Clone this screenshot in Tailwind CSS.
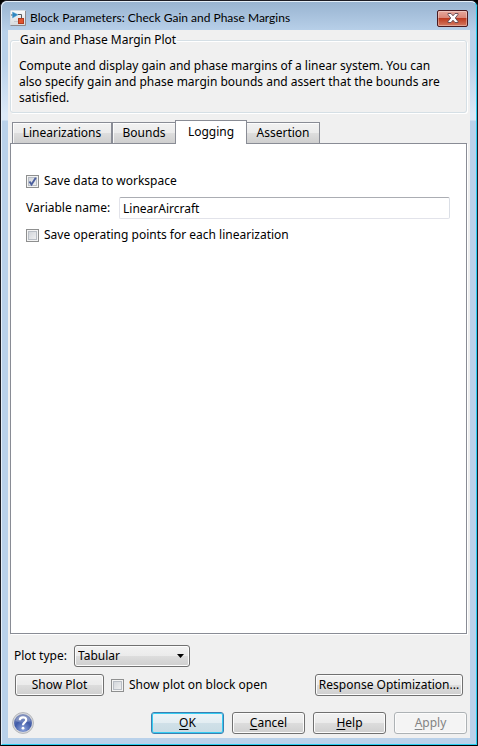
<!DOCTYPE html>
<html lang="en">

<head>
    <meta charset="UTF-8" />
    <meta name="viewport" content="width=device-width, initial-scale=1.0" />
    <title>Block Parameters: Check Gain and Phase Margins</title>
    <script src="https://cdn.jsdelivr.net/npm/@tailwindcss/browser@4"></script>
</head>

<body class="min-h-screen flex flex-col bg-black font-['Noto_Sans',sans-serif] text-[12px] leading-4 text-black">

    <div class="flex-1 flex flex-col rounded-t-[7px] border border-[#1c1c24] border-b-black bg-[#b9d1ea]">
        <div class="flex-1 flex flex-col rounded-t-[6px] border border-t-[#e4eef8] border-l-[#e4eef8] border-r-[#29cdf0] border-b-[#29cdf0] px-[6px] pb-[6px] bg-[linear-gradient(#99b4d1_0px,#b9d1ea_30px,#b9d1ea_60px,#dce9f7_112px,#dce9f7_118px,#b9d1ea_119px)]">

            <!-- title bar -->
            <header class="h-7 pt-1 flex items-center gap-1 pl-[2px] pr-[2px]">
                <svg class="size-4 shrink-0" viewBox="0 0 16 16" fill="none">
                    <defs>
                        <linearGradient id="tile" x2="0" y2="1">
                            <stop stop-color="#fbfbfb" />
                            <stop offset="1" stop-color="#d5d9dd" />
                        </linearGradient>
                    </defs>
                    <rect x=".5" y=".5" width="15" height="15" rx="1" fill="url(#tile)" stroke="#d7dce2" />
                    <path d="M.5 15.500h15V1" stroke="#8e8a8c" />
                    <path d="M1 5h2M8 4.500h3.500v4" stroke="#55585e" />
                    <path d="M2.500 2l5.500 2.700-5.500 3.300z" fill="#2f86c0" stroke="#5aa6d4" stroke-width=".5" />
                    <rect x="8.500" y="8.500" width="5" height="5" fill="#e0542e" stroke="#b03c20" />
                    <path d="M4 11.500h4" stroke="#c5c8cc" />
                </svg>
                <h1 class="flex-1 font-['Lato',sans-serif] text-[12px]">Block Parameters: Check Gain and Phase Margins</h1>
                <button type="button" aria-label="Close" class="w-[31px] h-[17px] flex items-center justify-center rounded-[2px] border border-[#4a1a20] bg-[linear-gradient(#e6a89c,#d98576_48%,#bd3b20_50%,#d47a62)] shadow-[inset_0_0_0_1px_#ffffff55]">
                    <svg class="w-3 h-[10px]" viewBox="0 0 12 10">
                        <path d="M1 .5h3l2 2.300 2-2.300h3v1L8.300 5 11 8.500v1H8L6 7.200 4 9.500H1v-1L3.700 5 1 1.500z" fill="#fff" stroke="#5c4650" stroke-width=".9" />
                    </svg>
                </button>
            </header>

            <main class="flex-1 flex flex-col bg-[#f0f0f0] pl-[2px] pr-[3px] pb-1">

                <fieldset class="mt-[2px] h-[81px] rounded-[3px] border border-[#d5dfe5] shadow-[inset_1px_1px_0_#fff,1px_1px_0_#fff] px-2">
                    <legend class="px-px">Gain and Phase Margin Plot</legend>
                    <p class="pt-[10px] pr-3">Compute and display gain and phase margins of a linear system. You can also specify gain and phase margin bounds and assert that the bounds are satisfied.</p>
                </fieldset>

                <!-- tabs -->
                <div role="tablist" class="mt-[7px] h-[23px] pl-[2px] flex items-end relative z-10">
                    <button type="button" role="tab" class="w-[100px] h-[21px] border border-b-0 border-[#898c95] bg-[linear-gradient(#f2f2f2,#ebebeb_50%,#dddddd_52%,#cfcfcf)] shadow-[inset_1px_1px_0_#ffffffcc]">Linearizations</button>
                    <button type="button" role="tab" class="w-[63px] h-[21px] border border-b-0 border-r-0 border-[#898c95] bg-[linear-gradient(#f2f2f2,#ebebeb_50%,#dddddd_52%,#cfcfcf)] shadow-[inset_1px_1px_0_#ffffffcc]">Bounds</button>
                    <button type="button" role="tab" aria-selected="true" class="w-[72px] h-6 -mb-px pb-px border border-b-0 border-[#898c95] bg-white">Logging</button>
                    <button type="button" role="tab" class="w-[73px] h-[21px] border border-b-0 border-l-0 border-[#898c95] bg-[linear-gradient(#f2f2f2,#ebebeb_50%,#dddddd_52%,#cfcfcf)] shadow-[inset_0_1px_0_#ffffffcc]">Assertion</button>
                </div>

                <section role="tabpanel" class="flex-1 border border-[#898c95] bg-white shadow-[1px_1px_0_#fff] pl-[15px] pr-4 pt-[29px]">
                    <label class="flex items-center gap-[5px]">
                        <input type="checkbox" checked class="peer appearance-none size-[13px] border border-[#8e8f8f] bg-[linear-gradient(135deg,#cbcfd5,#f6f6f6)] shadow-[inset_0_0_0_1px_#f4f4f4,inset_0_0_0_2px_#b9bec5]" />
                        <svg class="hidden peer-checked:block absolute size-[13px]" viewBox="0 0 13 13" fill="none">
                            <path d="M3.500 6.500L5.500 9.500L9.800 2.800" stroke="#4b5f9e" stroke-width="1.900" />
                        </svg>
                        Save data to workspace
                    </label>
                    <div class="mt-2 flex items-center gap-[6px]">
                        <label for="varName" class="w-[87px] shrink-0 whitespace-nowrap">Variable name:</label>
                        <input id="varName" type="text" value="LinearAircraft" class="flex-1 min-w-0 h-[22px] px-[3px] rounded-[2px] border border-[#e2e3ea] border-t-[#abadb3] border-r-[#dbdfe6] bg-white outline-none" />
                    </div>
                    <label class="mt-2 flex items-center gap-[5px]">
                        <input type="checkbox" class="appearance-none size-[13px] border border-[#8e8f8f] bg-[linear-gradient(135deg,#cbcfd5,#f6f6f6)] shadow-[inset_0_0_0_1px_#f4f4f4,inset_0_0_0_2px_#b9bec5]" />
                        Save operating points for each linearization
                    </label>
                </section>

                <div class="mt-[11px] pl-1 flex items-center">
                    <label for="plotType" class="w-[60px] whitespace-nowrap">Plot type:</label>
                    <div class="relative w-[116px]">
                        <select id="plotType" class="appearance-none w-full h-[22px] pl-[3px] rounded-[3px] border border-[#707070] bg-[linear-gradient(#f2f2f2,#ebebeb_48%,#dddddd_50%,#cfcfcf)] shadow-[inset_0_0_0_1px_#fcfcfc]">
                            <option>Tabular</option>
                        </select>
                        <svg class="absolute right-[6px] top-[9px] w-[7px] h-1 pointer-events-none" viewBox="0 0 7 4">
                            <path d="M0 0h7L3.500 4z" fill="#000" />
                        </svg>
                    </div>
                </div>

                <div class="mt-[7px] pl-[5px] pr-1 flex items-center">
                    <button type="button" class="w-[89px] h-[22px] rounded-[3px] border border-[#707070] bg-[linear-gradient(#f2f2f2,#ebebeb_48%,#dddddd_50%,#cfcfcf)] shadow-[inset_0_0_0_1px_#fcfcfc]">Show Plot</button>
                    <label class="ml-[7px] flex items-center gap-[5px]">
                        <input type="checkbox" class="appearance-none size-[13px] border border-[#8e8f8f] bg-[linear-gradient(135deg,#cbcfd5,#f6f6f6)] shadow-[inset_0_0_0_1px_#f4f4f4,inset_0_0_0_2px_#b9bec5]" />
                        Show plot on block open
                    </label>
                    <button type="button" class="ml-auto w-[148px] h-[22px] whitespace-nowrap rounded-[3px] border border-[#707070] bg-[linear-gradient(#f2f2f2,#ebebeb_48%,#dddddd_50%,#cfcfcf)] shadow-[inset_0_0_0_1px_#fcfcfc]">Response Optimization...</button>
                </div>

                <!-- dialog buttons -->
                <footer class="mt-4 pl-[2px] flex items-center gap-2">
                    <button type="button" aria-label="Help topics" class="mr-auto">
                        <svg class="size-[22px]" viewBox="0 0 22 22">
                            <defs>
                                <radialGradient id="ball" cx=".5" cy=".85" r=".85">
                                    <stop stop-color="#8fa6dc" />
                                    <stop offset=".55" stop-color="#3f5aa8" />
                                    <stop offset="1" stop-color="#8794bd" />
                                </radialGradient>
                            </defs>
                            <circle cx="11" cy="11" r="10.500" fill="#d6d8dc" stroke="#a9abb0" stroke-width=".8" />
                            <circle cx="11" cy="11" r="9" fill="url(#ball)" />
                            <path d="M3.500 9a7.600 6.500 0 0 1 15 0q-7.500 3-15 0z" fill="#fff" opacity=".22" />
                            <path d="M7.800 8.300C7.800 4.300 14.300 4.400 14.200 8C14.100 10.400 11 10.300 11 13.200" fill="none" stroke="#fff" stroke-width="2.200" />
                            <circle cx="11" cy="16.200" r="1.400" fill="#fff" />
                        </svg>
                    </button>
                    <button type="button" class="w-[73px] h-[22px] rounded-[3px] border border-[#3c7fb1] bg-[linear-gradient(#eef4f7,#e3edf2_48%,#d0e0e8_50%,#c9dbe4)] shadow-[inset_0_0_0_1px_#35ccf2]"><u class="underline-offset-2">O</u>K</button>
                    <button type="button" class="w-[73px] h-[22px] rounded-[3px] border border-[#707070] bg-[linear-gradient(#f2f2f2,#ebebeb_48%,#dddddd_50%,#cfcfcf)] shadow-[inset_0_0_0_1px_#fcfcfc]"><u class="underline-offset-2">C</u>ancel</button>
                    <button type="button" class="w-[73px] h-[22px] rounded-[3px] border border-[#707070] bg-[linear-gradient(#f2f2f2,#ebebeb_48%,#dddddd_50%,#cfcfcf)] shadow-[inset_0_0_0_1px_#fcfcfc]"><u class="underline-offset-2">H</u>elp</button>
                    <button type="button" disabled class="w-[73px] h-[22px] rounded-[3px] border border-[#adb2b5] bg-[#f4f4f4] text-[#838383] shadow-[inset_0_0_0_1px_#fcfcfc]"><u class="underline-offset-2">A</u>pply</button>
                </footer>
            </main>
        </div>
    </div>

</body>

</html>
